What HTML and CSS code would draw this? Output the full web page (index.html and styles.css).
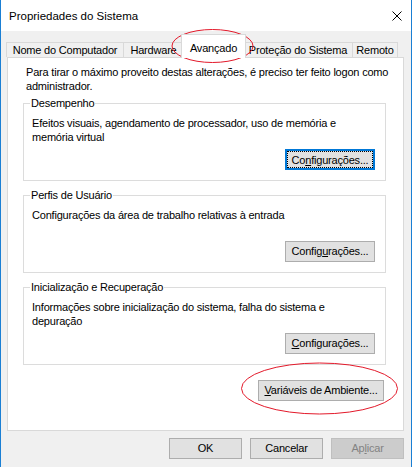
FILE: index.html
```html
<!DOCTYPE html>
<html lang="pt-BR">
<head>
  <meta charset="UTF-8">
  <meta name="viewport" content="width=device-width, initial-scale=1.0">
  <title>Propriedades do Sistema</title>
  <link rel="stylesheet" href="styles.css">
</head>
<body>
  <div class="window">
    <!-- Title bar -->
    <div class="titlebar">
      <span class="title">Propriedades do Sistema</span>
      <svg class="close" width="10" height="10" viewBox="0 0 10 10">
        <path d="M0.5 0.5 L9.5 9.5 M9.5 0.5 L0.5 9.5" stroke="#000" stroke-width="1" fill="none"/>
      </svg>
    </div>

    <div class="content">
      <!-- Tabs -->
      <div class="tabs">
        <div class="tab tab-nome">Nome do Computador</div>
        <div class="tab tab-hardware">Hardware</div>
        <div class="tab tab-avancado selected">Avançado</div>
        <div class="tab tab-protecao">Proteção do Sistema</div>
        <div class="tab tab-remoto">Remoto</div>
      </div>

      <!-- Tab page -->
      <div class="panel">
        <p class="intro">Para tirar o máximo proveito destas alterações, é preciso ter feito logon como<br>administrador.</p>

        <fieldset class="group">
          <legend>Desempenho</legend>
          <p class="group-text">Efeitos visuais, agendamento de processador, uso de memória e<br>memória virtual</p>
          <div class="group-actions">
            <button class="btn btn-settings focused">Co<u>n</u>figurações...</button>
          </div>
        </fieldset>

        <fieldset class="group">
          <legend>Perfis de Usuário</legend>
          <p class="group-text">Configurações da área de trabalho relativas à entrada</p>
          <div class="group-actions">
            <button class="btn btn-settings">Config<u>u</u>rações...</button>
          </div>
        </fieldset>

        <fieldset class="group">
          <legend>Inicialização e Recuperação</legend>
          <p class="group-text">Informações sobre inicialização do sistema, falha do sistema e<br>depuração</p>
          <div class="group-actions">
            <button class="btn btn-settings"><u>C</u>onfigurações...</button>
          </div>
        </fieldset>

        <div class="panel-actions">
          <button class="btn btn-env"><u>V</u>ariáveis de Ambiente...</button>
        </div>
      </div>

      <!-- Dialog buttons -->
      <div class="dialog-actions">
        <button class="btn btn-dialog">OK</button>
        <button class="btn btn-dialog">Cancelar</button>
        <button class="btn btn-dialog" disabled>Ap<u>l</u>icar</button>
      </div>
    </div>

    <!-- Red annotation circles -->
    <svg class="marks" width="412" height="467" viewBox="0 0 412 467">
      <ellipse cx="212.5" cy="46" rx="40.5" ry="16.5" fill="none" stroke="#e3192a" stroke-width="1"/>
      <ellipse cx="319.5" cy="388.5" rx="78" ry="25.5" fill="none" stroke="#e3192a" stroke-width="1"/>
    </svg>
  </div>
</body>
</html>
```

FILE: styles.css
```css
body {
  margin: 0;
  font-family: "Liberation Sans", Arial, sans-serif;
  font-size: 11px;
  letter-spacing: -0.2px;
  color: #000;
  background: #f0f0f0;
}
.window {
  position: relative;
  width: 412px;
  height: 467px;
  box-sizing: border-box;
  border-left: 1px solid #1a7fd4;
  border-right: 1px solid #1a7fd4;
  background: #f0f0f0;
  overflow: hidden;
}
.titlebar {
  display: flex;
  align-items: center;
  height: 31px;
  padding-left: 8px;
  background: #fff;
}
.title {
  font-size: 11.5px;
  letter-spacing: 0;
}
.close {
  margin-left: auto;
  margin-right: 9px;
}
.content {
  padding-left: 6px;
}

/* Tabs */
.tabs {
  display: flex;
  align-items: flex-end;
  height: 23px;
  margin-top: 3px;
  margin-left: -1px;
}
.tab {
  box-sizing: border-box;
  height: 15px;
  margin-left: -1px;
  border: 1px solid #d9d9d9;
  border-bottom: none;
  background: #f0f0f0;
  line-height: 14px;
  text-align: center;
  white-space: nowrap;
}
.tab:first-child {
  margin-left: 0;
}
.tab-nome { width: 118px; }
.tab-hardware { width: 61px; }
.tab-avancado { width: 65px; }
.tab-protecao { width: 110px; }
.tab-remoto { width: 46px; }
.tab.selected {
  position: relative;
  z-index: 1;
  height: 24px;
  margin: 0 -2px -1px -3px;
  padding-top: 6px;
  background: #fff;
}

/* Tab page */
.panel {
  box-sizing: border-box;
  width: 397px;
  height: 374px;
  padding: 7px 19px 0 18px;
  border: 1px solid #d9d9d9;
  background: #fff;
}
.intro {
  margin: 0;
  line-height: 14px;
  white-space: nowrap;
}
.group {
  box-sizing: border-box;
  width: 363px;
  min-width: 0;
  margin: 7px 0 0 -3px;
  padding: 6px 10px 10px 8px;
  border: 1px solid #dcdcdc;
}
.intro + .group {
  margin-top: 3px;
}
.group legend {
  margin-left: -2px;
  padding: 0 1px;
  line-height: 14px;
}
.group-text {
  margin: 0;
  min-height: 28px;
  line-height: 14px;
  white-space: nowrap;
}
.group-actions {
  display: flex;
  justify-content: flex-end;
  margin-top: 5px;
}
.panel-actions {
  display: flex;
  justify-content: flex-end;
  margin-top: 15px;
}
.dialog-actions {
  display: flex;
  justify-content: flex-end;
  gap: 8px;
  width: 397px;
  margin-top: 7px;
}

/* Buttons */
.btn {
  box-sizing: border-box;
  height: 21px;
  padding: 0;
  border: 1px solid #adadad;
  background: #e1e1e1;
  font-family: inherit;
  font-size: 11px;
  letter-spacing: -0.2px;
  color: #000;
  line-height: 19px;
  text-align: center;
}
.btn-settings { width: 90px; }
.btn-env { width: 126px; }
.btn-dialog { width: 73px; }
.btn.focused {
  position: relative;
  border: 2px solid #0078d7;
}
.btn.focused::after {
  content: "";
  position: absolute;
  top: 0;
  left: 0;
  right: 0;
  bottom: 0;
  border: 1px dotted #000;
}
.btn:disabled {
  border-color: #bfbfbf;
  background: #cccccc;
  color: #838383;
}

/* Annotation overlay */
.marks {
  position: absolute;
  top: 0;
  left: -1px;
  pointer-events: none;
}
```
